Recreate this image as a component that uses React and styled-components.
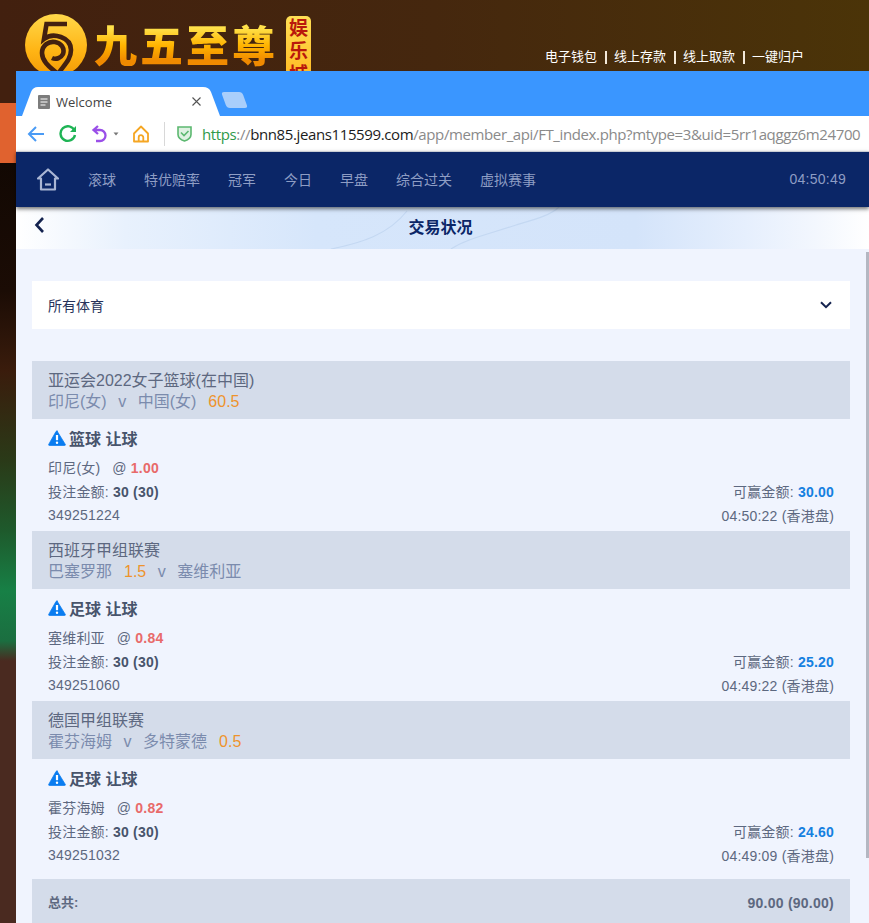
import React from "react";
import styled, { createGlobalStyle } from "styled-components";

const GlobalStyle = createGlobalStyle`
  html, body {
    margin: 0;
    padding: 0;
    background: #42210f;
  }
  body {
    font-family: "Liberation Sans", "Noto Sans CJK SC", sans-serif;
  }
`;

const Page = styled.div`
  width: 869px;
  height: 923px;
  overflow: hidden;
  display: flex;
  flex-direction: column;
`;

const SiteHeader = styled.header`
  flex: 0 0 71px;
  height: 71px;
  overflow: hidden;
  display: flex;
  justify-content: space-between;
  background: linear-gradient(90deg, #42200f 0%, #45270e 50%, #4b3408 100%);
`;

const Logo = styled.div`
  display: flex;
  align-items: flex-start;
  padding: 14px 0 0 25px;
`;

const LogoName = styled.div`
  margin: 4px 0 0 7px;
  font-family: "Noto Sans CJK SC", sans-serif;
  font-weight: 900;
  font-size: 43px;
  line-height: 50px;
  letter-spacing: 3px;
  white-space: nowrap;
  color: transparent;
  background: linear-gradient(180deg, #ffe14a 20%, #ffb400 55%, #f08a00 85%);
  -webkit-background-clip: text;
  background-clip: text;
`;

const LogoBadge = styled.div`
  width: 25px;
  height: 70px;
  margin: 2px 0 0 8px;
  border-radius: 5px;
  background: linear-gradient(180deg, #ffdf55, #ffb41a);
  color: #b9180c;
  font-family: "Liberation Serif", "Noto Sans CJK SC", serif;
  font-weight: 700;
  font-size: 19px;
  line-height: 23px;
  text-align: center;
  padding-top: 1px;
`;

const SiteLinks = styled.nav`
  display: flex;
  align-items: center;
  align-self: flex-end;
  height: 14px;
  margin: 0 65px 7px 0;
  color: #fff;
  font-size: 13px;
  line-height: 14px;
`;

const LinkDivider = styled.i`
  width: 2px;
  height: 13px;
  margin: 0 7px 0 8px;
  background: #f3e8d8;
`;

const Stage = styled.div`
  flex: 1;
  display: flex;
  min-height: 0;
`;

const Wallpaper = styled.div`
  flex: 0 0 16px;
  background: linear-gradient(
    180deg,
    #42200f 0,
    #42200f 32px,
    #e0622f 32px,
    #e0622f 92px,
    #120803 92px,
    #1b0c05 220px,
    #3a1c0c 300px,
    #2a3a18 390px,
    #1e5a2c 460px,
    #178046 520px,
    #1b6e40 570px,
    #4a2a20 590px,
    #4a2a20 100%
  );
`;

const Browser = styled.div`
  flex: 1;
  min-width: 0;
  display: flex;
  flex-direction: column;
`;

const TabStrip = styled.div`
  flex: 0 0 45px;
  display: flex;
  align-items: flex-end;
  background: #3a96ff;
  padding-left: 6px;
`;

const Tab = styled.div`
  width: 198px;
  height: 29px;
  box-sizing: border-box;
  padding: 0 19px 0 16px;
  display: flex;
  align-items: center;
  background: #fff;
  clip-path: path("M0 29 L9 5 Q11 0 16 0 L181 0 Q187 0 189 5 L198 29 Z");
`;

const TabTitle = styled.span`
  flex: 1;
  margin-left: 6px;
  font-family: "Open Sans", sans-serif;
  font-size: 13px;
  color: #444;
`;

const NewTab = styled.div`
  width: 21px;
  height: 16px;
  margin: 0 0 8px 4px;
  border-radius: 3px;
  background: #a9cefb;
  transform: skewX(20deg);
`;

const AddressBar = styled.div`
  flex: 0 0 35px;
  display: flex;
  align-items: center;
  padding-left: 11px;
  background: #fff;
  overflow: hidden;
  white-space: nowrap;
`;

const ToolIcon = styled.svg`
  flex: none;
  margin-right: ${(p) => p.$gap}px;
`;

const ToolDivider = styled.i`
  flex: none;
  width: 1px;
  height: 24px;
  margin-right: 12px;
  background: #d8d8d8;
`;

const Url = styled.div`
  font-family: "Open Sans", sans-serif;
  font-size: 15px;
  letter-spacing: -0.38px;
  color: #8a8a8a;
  margin-left: 10px;
`;

const UrlScheme = styled.span`
  color: #2f9a4a;
`;

const UrlHost = styled.span`
  color: #1c1c1c;
`;

const NavBar = styled.nav`
  position: relative;
  z-index: 2;
  flex: 0 0 56px;
  box-sizing: border-box;
  display: flex;
  align-items: center;
  padding: 0 23px 1px 21px;
  border-top: 1px solid #c9ccd3;
  background: #0b2667;
  box-shadow: 0 2px 4px rgba(0, 0, 0, 0.55);
  color: #8e9dc4;
  font-size: 14px;
`;

const NavList = styled.div`
  flex: 1;
  display: flex;
  gap: 28px;
  margin-left: 29px;
`;

const Clock = styled.span`
  font-size: 14px;
  letter-spacing: 0.25px;
`;

const TitleBar = styled.div`
  flex: 0 0 42px;
  box-sizing: border-box;
  padding: 0 4px 4px 0;
  display: flex;
  align-items: center;
  justify-content: center;
  position: relative;
  overflow: hidden;
  background: linear-gradient(
    90deg,
    #fff 0,
    #e8f1fd 110px,
    #d6e6fb 300px,
    #d4e4fa 620px,
    #e6effd 730px,
    #f3f7fe 800px,
    #fff 853px
  );
`;

const TitleWaves = styled.svg`
  position: absolute;
  left: 0;
  top: 0;
`;

const BackButton = styled.svg`
  position: absolute;
  left: 17px;
  top: 9px;
`;

const Title = styled.h1`
  position: relative;
  margin: 0;
  font-size: 16px;
  font-weight: 700;
  color: #0b2667;
`;

const Body = styled.div`
  flex: 1;
  min-height: 0;
  display: flex;
  background: #f0f4fe;
`;

const Content = styled.main`
  flex: 0 0 850px;
  box-sizing: border-box;
  padding: 32px 16px 0;
`;

const ScrollTrack = styled.div`
  flex: 1;
  padding-top: 3px;
`;

const ScrollThumb = styled.div`
  height: 606px;
  background: #b4b7c2;
`;

const SportSelect = styled.div`
  height: 48px;
  box-sizing: border-box;
  padding: 0 18px 0 16px;
  margin-bottom: 32px;
  display: flex;
  align-items: center;
  justify-content: space-between;
  background: #fff;
  font-size: 14px;
  color: #27335a;
`;

const MatchHead = styled.div`
  height: 58px;
  box-sizing: border-box;
  padding: 9px 16px 0;
  background: #d4dcea;
  font-size: 16px;
  line-height: 21px;
  color: #5d6880;
`;

const Teams = styled.div`
  color: #7b8bad;
  white-space: nowrap;
`;

const Versus = styled.span`
  margin: 0 11.5px;
`;

const Odds = styled.span`
  color: #ee932c;
  margin-left: 12px;
`;

const BetBody = styled.div`
  height: 112px;
  box-sizing: border-box;
  padding: 7px 16px 0;
`;

const BetType = styled.div`
  height: 24px;
  display: flex;
  align-items: center;
  gap: 3px;
  margin-bottom: 5px;
  font-size: 16px;
  font-weight: 700;
  color: #48546c;
`;

const Row = styled.div`
  height: 24px;
  display: flex;
  align-items: center;
  justify-content: space-between;
  font-size: 14px;
  letter-spacing: 0.2px;
  color: #5d6880;
`;

const Figure = styled.b`
  color: ${(p) => p.$color || "#48546c"};
`;

const Pick = styled.span`
  margin-right: 12px;
`;

const Total = styled.div`
  margin-top: 8px;
  height: 50px;
  box-sizing: border-box;
  padding: 0 16px 0;
  display: flex;
  align-items: flex-start;
  justify-content: space-between;
  background: #d4dcea;
  font-weight: 700;
  color: #5d6880;
  line-height: 48px;
  font-size: 13px;
`;

const TotalFigure = styled.span`
  font-size: 14px;
  letter-spacing: 0.25px;
`;

const BadgeMark = () => (
  <svg width="62" height="62" viewBox="0 0 62 62" style={{ flex: "none" }}>
    <defs>
      <linearGradient id="coin" x1="0" y1="0" x2="0" y2="1">
        <stop offset="0" stopColor="#ffd84a" />
        <stop offset="0.6" stopColor="#ffb414" />
        <stop offset="1" stopColor="#f39a06" />
      </linearGradient>
    </defs>
    <circle cx="31" cy="31" r="31" fill="url(#coin)" />
    <path
      d="M42 10H21.5L19 25C28 18 46 23 46 36C46 46 38 52 33 60C26 54 17 48 17 39C17 31 24 27 30 28C36 29 40 34 38 40C36 44 31 46 27 44"
      fill="none"
      stroke="#432010"
      strokeWidth="4.6"
    />
  </svg>
);

const DocIcon = () => (
  <svg width="12" height="14" viewBox="0 0 12 14" style={{ flex: "none" }}>
    <rect width="12" height="14" rx="1" fill="#7c7c7c" />
    <path d="M2.5 4h7M2.5 7h7M2.5 10h5" stroke="#fff" strokeWidth="1" />
  </svg>
);

const CloseIcon = () => (
  <svg width="9" height="9" viewBox="0 0 9 9" style={{ flex: "none" }}>
    <path d="M0.5 0.5l8 8M8.5 0.5l-8 8" stroke="#555" strokeWidth="1.1" />
  </svg>
);

const HomeOutline = () => (
  <svg width="22" height="23" viewBox="0 0 22 23" style={{ flex: "none" }}>
    <path
      d="M11 1.5L1 10.5h3V21.5h14V10.5h3z"
      fill="none"
      stroke="#aab6d4"
      strokeWidth="2.2"
      strokeLinejoin="round"
    />
    <path d="M8 16.5h6" stroke="#aab6d4" strokeWidth="2.2" />
  </svg>
);

const Warning = () => (
  <svg width="18" height="16" viewBox="0 0 18 16" style={{ flex: "none" }}>
    <path
      d="M9 1L17.3 14.4Q17.6 15.4 16.6 15.4H1.4Q0.4 15.4 0.7 14.4L8 1.5Q9 0 10 1.5"
      fill="#0a7cf0"
      stroke="#0a7cf0"
      strokeWidth="0.8"
    />
    <path d="M9 5v5.2" stroke="#fff" strokeWidth="2.2" />
    <circle cx="9" cy="12.8" r="1.2" fill="#fff" />
  </svg>
);

const Chevron = () => (
  <svg width="12" height="8" viewBox="0 0 12 8">
    <path d="M1 1.2l5 5 5-5" fill="none" stroke="#14234f" strokeWidth="2" />
  </svg>
);

const navItems = ["滚球", "特优赔率", "冠军", "今日", "早盘", "综合过关", "虚拟赛事"];

const bets = [
  {
    league: "亚运会2022女子篮球(在中国)",
    teams: (
      <>
        印尼(女)<Versus>v</Versus>中国(女)<Odds>60.5</Odds>
      </>
    ),
    type: "篮球 让球",
    pick: "印尼(女)",
    odds: "1.00",
    win: "30.00",
    id: "349251224",
    time: "04:50:22 (香港盘)",
  },
  {
    league: "西班牙甲组联赛",
    teams: (
      <>
        巴塞罗那<Odds>1.5</Odds>
        <Versus>v</Versus>塞维利亚
      </>
    ),
    type: "足球 让球",
    pick: "塞维利亚",
    odds: "0.84",
    win: "25.20",
    id: "349251060",
    time: "04:49:22 (香港盘)",
  },
  {
    league: "德国甲组联赛",
    teams: (
      <>
        霍芬海姆<Versus>v</Versus>多特蒙德<Odds>0.5</Odds>
      </>
    ),
    type: "足球 让球",
    pick: "霍芬海姆",
    odds: "0.82",
    win: "24.60",
    id: "349251032",
    time: "04:49:09 (香港盘)",
  },
];

const BetCard = ({ bet }) => (
  <>
    <MatchHead>
      <div>{bet.league}</div>
      <Teams>{bet.teams}</Teams>
    </MatchHead>
    <BetBody>
      <BetType>
        <Warning />
        {bet.type}
      </BetType>
      <Row>
        <span>
          <Pick>{bet.pick}</Pick>@ <Figure $color="#e86a6a">{bet.odds}</Figure>
        </span>
      </Row>
      <Row>
        <span>
          投注金额: <Figure>30 (30)</Figure>
        </span>
        <span>
          可赢金额: <Figure $color="#1580e0">{bet.win}</Figure>
        </span>
      </Row>
      <Row>
        <span>{bet.id}</span>
        <span>{bet.time}</span>
      </Row>
    </BetBody>
  </>
);

export default function App() {
  return (
    <Page>
      <GlobalStyle />
      <SiteHeader>
        <Logo>
          <BadgeMark />
          <LogoName>九五至尊</LogoName>
          <LogoBadge>
            娱
            <br />
            乐
            <br />
            城
          </LogoBadge>
        </Logo>
        <SiteLinks>
          电子钱包
          <LinkDivider />
          线上存款
          <LinkDivider />
          线上取款
          <LinkDivider />
          一键归户
        </SiteLinks>
      </SiteHeader>
      <Stage>
        <Wallpaper />
        <Browser>
          <TabStrip>
            <Tab>
              <DocIcon />
              <TabTitle>Welcome</TabTitle>
              <CloseIcon />
            </Tab>
            <NewTab />
          </TabStrip>
          <AddressBar>
            <ToolIcon $gap={14} width="18" height="18" viewBox="0 0 18 18">
              <path d="M17 9H2M9 2L2 9l7 7" fill="none" stroke="#4a9bf5" strokeWidth="2" />
            </ToolIcon>
            <ToolIcon $gap={14} width="18" height="18" viewBox="0 0 18 18">
              <path d="M15.5 5.5A7.3 7.3 0 1 0 16 10" fill="none" stroke="#1fb455" strokeWidth="2.4" />
              <path d="M17 1v6h-6z" fill="#1fb455" />
            </ToolIcon>
            <ToolIcon $gap={3} width="18" height="18" viewBox="0 0 18 18">
              <path
                d="M7 1L2.5 5L7 9M3 5h6a5.5 5.5 0 0 1 0 11H5"
                fill="none"
                stroke="#9a4fe8"
                strokeWidth="2.3"
              />
            </ToolIcon>
            <ToolIcon $gap={12} width="8" height="6" viewBox="0 0 8 6">
              <path d="M1.5 1.5h5L4 4.5z" fill="#777" />
            </ToolIcon>
            <ToolIcon $gap={14} width="18" height="18" viewBox="0 0 18 18">
              <path
                d="M9 1.5L2 8.5V16.5H16V8.5zM6.7 16.5V12.5a2.3 2.3 0 0 1 4.6 0V16.5"
                fill="none"
                stroke="#f5a623"
                strokeWidth="1.8"
                strokeLinejoin="round"
              />
            </ToolIcon>
            <ToolDivider />
            <ToolIcon $gap={0} width="15" height="17" viewBox="0 0 15 17">
              <path
                d="M1 2h13v7.5c0 3.5-3.5 5.5-6.5 6.5C4.5 15 1 13 1 9.5z"
                fill="#dff1e2"
                stroke="#5cb870"
                strokeWidth="1.6"
              />
              <path d="M4 7.5l3 3 4.5-4.5" fill="none" stroke="#5cb870" strokeWidth="1.6" />
            </ToolIcon>
            <Url>
              <UrlScheme>https</UrlScheme>://<UrlHost>bnn85.jeans115599.com</UrlHost>
              /app/member_api/FT_index.php?mtype=3&amp;uid=5rr1aqggz6m24700
            </Url>
          </AddressBar>
          <NavBar>
            <HomeOutline />
            <NavList>
              {navItems.map((item) => (
                <span key={item}>{item}</span>
              ))}
            </NavList>
            <Clock>04:50:49</Clock>
          </NavBar>
          <TitleBar>
            <TitleWaves width="853" height="42" viewBox="0 0 853 42">
              <path
                d="M315 42C345 36 372 28 391 4M435 42C450 32 470 28 500 18C520 12 535 8 543 0"
                fill="none"
                stroke="#c4d8f2"
                strokeWidth="1.2"
              />
            </TitleWaves>
            <BackButton width="14" height="18" viewBox="0 0 14 18">
              <path d="M10 2L3.5 9l6.5 7" fill="none" stroke="#14234f" strokeWidth="2.6" />
            </BackButton>
            <Title>交易状况</Title>
          </TitleBar>
          <Body>
            <Content>
              <SportSelect>
                所有体育
                <Chevron />
              </SportSelect>
              {bets.map((bet) => (
                <BetCard key={bet.id} bet={bet} />
              ))}
              <Total>
                总共:
                <TotalFigure>90.00 (90.00)</TotalFigure>
              </Total>
            </Content>
            <ScrollTrack>
              <ScrollThumb />
            </ScrollTrack>
          </Body>
        </Browser>
      </Stage>
    </Page>
  );
}
